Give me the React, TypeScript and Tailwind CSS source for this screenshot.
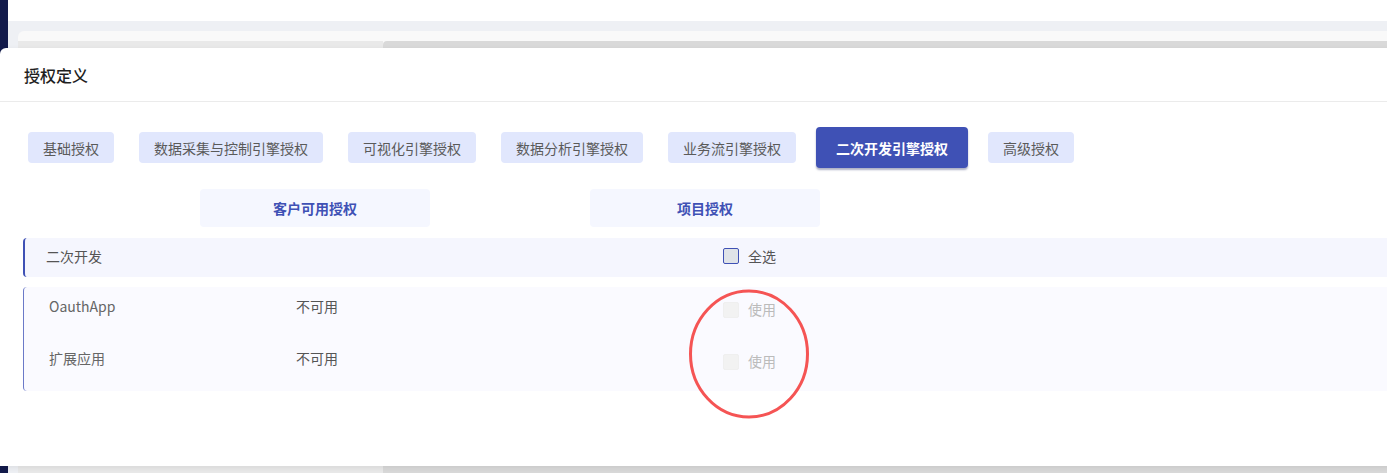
import React from "react";

const tabs = [
  "基础授权",
  "数据采集与控制引擎授权",
  "可视化引擎授权",
  "数据分析引擎授权",
  "业务流引擎授权",
  "二次开发引擎授权",
  "高级授权",
];

const rows = [
  { name: "OauthApp", status: "不可用" },
  { name: "扩展应用", status: "不可用" },
];

export default function App() {
  return (
    <div
      className="relative h-[473px] w-full overflow-hidden bg-white"
      style={{ fontFamily: '"Noto Sans CJK SC", "Noto Sans", sans-serif' }}
    >
      {/* background page */}
      <div className="flex h-full">
        <div className="w-[8px] h-full bg-[#131b4b]" />
        <div className="flex-1 flex flex-col">
          <div className="h-[21px] bg-white" />
          <div className="flex-1 flex flex-col bg-[#eef0f4] pt-[10px] pl-[10px]">
            <div className="flex-1 rounded-tl-[6px] bg-[#f9f9f9] flex flex-col">
              <div className="h-[10px]" />
              <div className="flex-1 flex">
                <div className="w-[365px] bg-[#e9e9e9]" />
                <div className="flex-1 bg-[#d9d9d9] rounded-tl-[4px]" />
              </div>
            </div>
          </div>
        </div>
      </div>

      {/* modal */}
      <div className="absolute left-0 top-[48px] right-[-30px] h-[418px] bg-white rounded-tl-[6px] shadow-[0_2px_6px_rgba(0,0,0,0.08)]">
        <div className="h-[54px] flex items-center px-[24px] border-b border-[#ebebeb]">
          <span className="text-[16px] font-medium text-[#1f1f1f] leading-none">授权定义</span>
        </div>

        <div className="flex items-center h-[41px] mt-[25px] pl-[28px]">
          {tabs.map((t, i) => {
            const active = i === 5;
            return active ? (
              <div
                key={t}
                className="h-[41px] px-[20px] ml-[-5px] mr-[20px] flex items-center rounded-[4px] bg-[#3f51b5] text-white text-[14px] font-bold leading-none shadow-[0_2px_2px_rgba(20,30,90,0.35)]"
              >
                {t}
              </div>
            ) : (
              <div
                key={t}
                className="h-[31px] px-[15px] mr-[25px] flex items-center rounded-[4px] bg-[#e1e7fd] text-[#5a5a5a] text-[14px] leading-none"
              >
                {t}
              </div>
            );
          })}
        </div>

        <div className="flex mt-[21px] pl-[200px] gap-[160px]">
          <div className="w-[230px] h-[38px] rounded-[4px] bg-[#f5f7ff] flex items-center justify-center text-[14px] font-bold text-[#3f51b5] leading-none">
            客户可用授权
          </div>
          <div className="w-[230px] h-[38px] rounded-[4px] bg-[#f5f7ff] flex items-center justify-center text-[14px] font-bold text-[#3f51b5] leading-none">
            项目授权
          </div>
        </div>

        <div className="ml-[23px] mt-[11px] h-[39px] pb-[3px] flex items-center bg-[#f5f6fe] border-l-2 border-[#3f51b5] rounded-l-[4px] text-[14px] text-[#555] leading-none">
          <span className="pl-[21px] w-[698px] -mt-[1px]">二次开发</span>
          <span className="w-[16px] h-[16px] rounded-[2px] border-[1.5px] border-[#3f51b5] bg-[#dfe3e8]" />
          <span className="ml-[9px] -mt-[1px]">全选</span>
        </div>

        <div className="ml-[23px] mt-[10px] pt-[7px] pb-[21px] flex flex-col gap-[28px] bg-[#fafaff] border-l border-[#6b79c8] rounded-l-[4px] text-[14px] leading-none">
          {rows.map((r) => (
            <div key={r.name} className="h-[24px] flex items-center">
              <span className="pl-[25px] w-[272px] text-[#666]">{r.name}</span>
              <span className="w-[427px] text-[#555]">{r.status}</span>
              <div className="flex items-center mt-[7px]">
                <span className="w-[16px] h-[16px] rounded-[2px] bg-[#f2f2f2] border border-[#efefef]" />
                <span className="ml-[9px] text-[#bbbbbb] -mt-[1px]">使用</span>
              </div>
            </div>
          ))}
        </div>
      </div>

      {/* red annotation circle */}
      <svg
        className="absolute left-[688px] top-[288px]"
        width="122"
        height="132"
        viewBox="0 0 122 132"
      >
        <ellipse cx="61" cy="66" rx="58.5" ry="63" fill="none" stroke="#f55454" strokeWidth="3" />
      </svg>
    </div>
  );
}
